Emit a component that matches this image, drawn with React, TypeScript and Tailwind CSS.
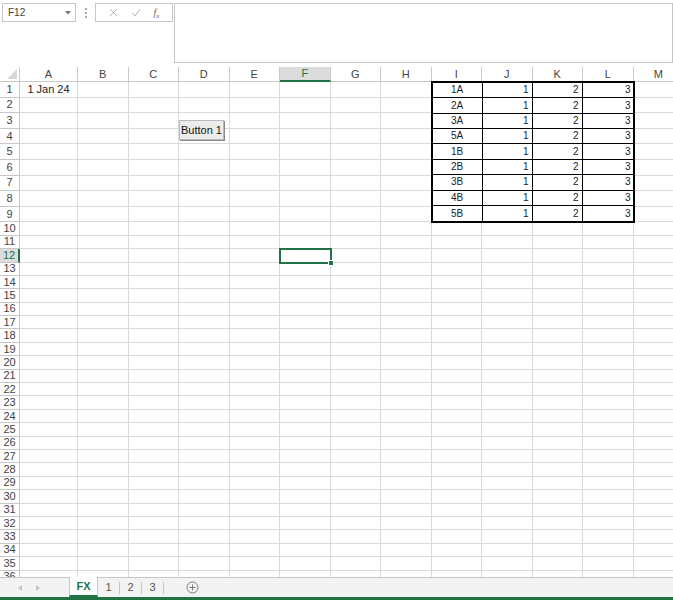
import React from 'react';

const COLS = ['A', 'B', 'C', 'D', 'E', 'F', 'G', 'H', 'I', 'J', 'K', 'L', 'M'];
const ROW_COUNT = 36;
const ACTIVE_COL = 'F';
const ACTIVE_ROW = 12;

const tableRows = ['1A', '2A', '3A', '5A', '1B', '2B', '3B', '4B', '5B'];

const font = { fontFamily: '"Liberation Sans", Arial, sans-serif' };

// same track sizes for the cell layer and the object layer
const sheetGrid =
  'grid grid-cols-[20px_58px_repeat(12,50.5px)] grid-rows-[15px_repeat(9,15.6px)_repeat(27,13.4px)]';

const FormulaBar: React.FC = () => (
  <div className="flex items-start h-[67px] pt-[3px] pl-[2px] bg-white">
    <div className="w-[74px] h-[19px] border border-[#c6c6c6] flex items-center justify-between pl-[5px] pr-[4px] text-[10px] text-[#444]">
      <span>F12</span>
      <svg width="6" height="4" viewBox="0 0 6 4">
        <path d="M0 0 L6 0 L3 3.5 Z" fill="#777" />
      </svg>
    </div>
    <div className="w-[19px] h-[19px] flex flex-col items-center justify-center gap-[2px]">
      <span className="w-[2px] h-[2px] bg-[#aaa]" />
      <span className="w-[2px] h-[2px] bg-[#aaa]" />
      <span className="w-[2px] h-[2px] bg-[#aaa]" />
    </div>
    <div className="w-[78px] h-[19px] border border-[#c6c6c6] flex items-center justify-around px-[6px]">
      <svg width="9" height="9" viewBox="0 0 9 9">
        <path d="M1 1 L8 8 M8 1 L1 8" stroke="#b5b5b5" strokeWidth="1" />
      </svg>
      <svg width="10" height="9" viewBox="0 0 10 9">
        <path d="M1 5 L4 8 L9 1" stroke="#b5b5b5" strokeWidth="1" fill="none" />
      </svg>
      <span className="text-[10px] italic text-[#666]" style={{ fontFamily: '"Liberation Serif", serif' }}>
        f<sub className="text-[7px]">x</sub>
      </span>
    </div>
    <div className="ml-[1px] flex-1 h-[60px] border border-[#c6c6c6]" />
  </div>
);

const Cells: React.FC = () => {
  const cells: React.ReactNode[] = [];

  for (let r = 0; r <= ROW_COUNT; r++) {
    for (let c = 0; c <= COLS.length; c++) {
      const key = `${r}-${c}`;
      if (r === 0 && c === 0) {
        cells.push(
          <div key={key} className="border-r border-b border-[#c8c8c8] bg-white flex items-end justify-end p-[2px]">
            <svg width="10" height="10" viewBox="0 0 10 10">
              <path d="M10 0 L10 10 L0 10 Z" fill="#d6d6d6" />
            </svg>
          </div>
        );
      } else if (r === 0) {
        const letter = COLS[c - 1];
        const active = letter === ACTIVE_COL;
        cells.push(
          <div
            key={key}
            className={
              active
                ? 'border-r border-[#c8c8c8] border-b-2 border-b-[#217346] bg-[#dcdcdc] text-[#217346] flex items-center justify-center text-[11px]'
                : 'border-r border-b border-[#c8c8c8] bg-white text-[#444] flex items-center justify-center text-[11px]'
            }
          >
            {letter}
          </div>
        );
      } else if (c === 0) {
        const active = r === ACTIVE_ROW;
        cells.push(
          <div
            key={key}
            className={
              active
                ? 'border-b border-[#c8c8c8] border-r-2 border-r-[#217346] bg-[#dcdcdc] text-[#217346] flex items-center justify-center text-[11px] leading-none'
                : 'border-r border-b border-[#c8c8c8] bg-white text-[#444] flex items-center justify-center text-[11px] leading-none'
            }
          >
            {r}
          </div>
        );
      } else {
        cells.push(
          <div key={key} className="border-r border-b border-[#dadada] bg-white flex items-center justify-center text-[11px] text-[#222] leading-none whitespace-nowrap">
            {r === 1 && c === 1 ? '1 Jan 24' : null}
          </div>
        );
      }
    }
  }

  return <div className={`${sheetGrid} col-start-1 row-start-1`}>{cells}</div>;
};

const SheetObjects: React.FC = () => (
  <div className={`${sheetGrid} col-start-1 row-start-1 pointer-events-none`}>
    {/* bordered block I1:L9 */}
    <div className="col-start-10 col-span-4 row-start-2 row-span-9 -m-px border-2 border-black bg-white grid grid-cols-4 grid-rows-9 text-[10px] text-[#222] leading-none">
      {tableRows.map((label, i) => (
        <React.Fragment key={label}>
          <div className={`flex items-center justify-center border-r border-black ${i < 8 ? 'border-b' : ''}`}>{label}</div>
          <div className={`flex items-center justify-end pr-[3px] border-r border-black ${i < 8 ? 'border-b' : ''}`}>1</div>
          <div className={`flex items-center justify-end pr-[3px] border-r border-black ${i < 8 ? 'border-b' : ''}`}>2</div>
          <div className={`flex items-center justify-end pr-[2px] border-black ${i < 8 ? 'border-b' : ''}`}>3</div>
        </React.Fragment>
      ))}
    </div>

    {/* form control button */}
    <div className="col-start-5 col-span-2 row-start-4 row-span-2 self-start justify-self-start mt-[7px]">
      <div className="w-[45px] h-[20px] bg-[#ececec] border border-[#b9b9b9] shadow-[1px_1px_0_#8a8a8a] flex items-center justify-center text-[11px] text-[#111]">
        Button 1
      </div>
    </div>

    {/* active cell F12 */}
    <div className="col-start-7 row-start-13 -m-px relative border-2 border-[#217346]">
      <span className="absolute -right-[4px] -bottom-[4px] w-[6px] h-[6px] bg-[#217346] border border-white" />
    </div>
  </div>
);

const Sheet: React.FC = () => (
  <div className="flex-1 overflow-hidden">
    <div className="grid w-max">
      <Cells />
      <SheetObjects />
    </div>
  </div>
);

const SheetTabs: React.FC = () => (
  <div className="h-[20px] bg-[#f3f3f3] border-t border-[#c6c6c6] flex items-stretch text-[11px] text-[#555]">
    <div className="w-[69px] flex items-center gap-[14px] pl-[18px]">
      <svg width="4" height="6" viewBox="0 0 4 6">
        <path d="M4 0 L4 6 L0 3 Z" fill="#c4c4c4" />
      </svg>
      <svg width="4" height="6" viewBox="0 0 4 6">
        <path d="M0 0 L0 6 L4 3 Z" fill="#c4c4c4" />
      </svg>
    </div>
    <div className="w-[29px] -mt-px bg-white border-x border-[#c6c6c6] border-b-2 border-b-[#217346] flex items-center justify-center font-bold text-[#217346]">
      FX
    </div>
    {['1', '2', '3'].map(name => (
      <div key={name} className="w-[22px] flex items-center justify-center">
        <span className="flex-1 text-center">{name}</span>
        <span className="w-px h-[12px] bg-[#c6c6c6]" />
      </div>
    ))}
    <div className="ml-[22px] flex items-center">
      <svg width="13" height="13" viewBox="0 0 13 13">
        <circle cx="6.5" cy="6.5" r="5.5" fill="none" stroke="#777" strokeWidth="1" />
        <path d="M6.5 3.5 V9.5 M3.5 6.5 H9.5" stroke="#777" strokeWidth="1" />
      </svg>
    </div>
  </div>
);

export default function App() {
  return (
    <div className="w-[673px] h-[600px] flex flex-col overflow-hidden bg-white" style={font}>
      <FormulaBar />
      <Sheet />
      <SheetTabs />
      <div className="h-[3px] bg-[#217346]" />
    </div>
  );
}
